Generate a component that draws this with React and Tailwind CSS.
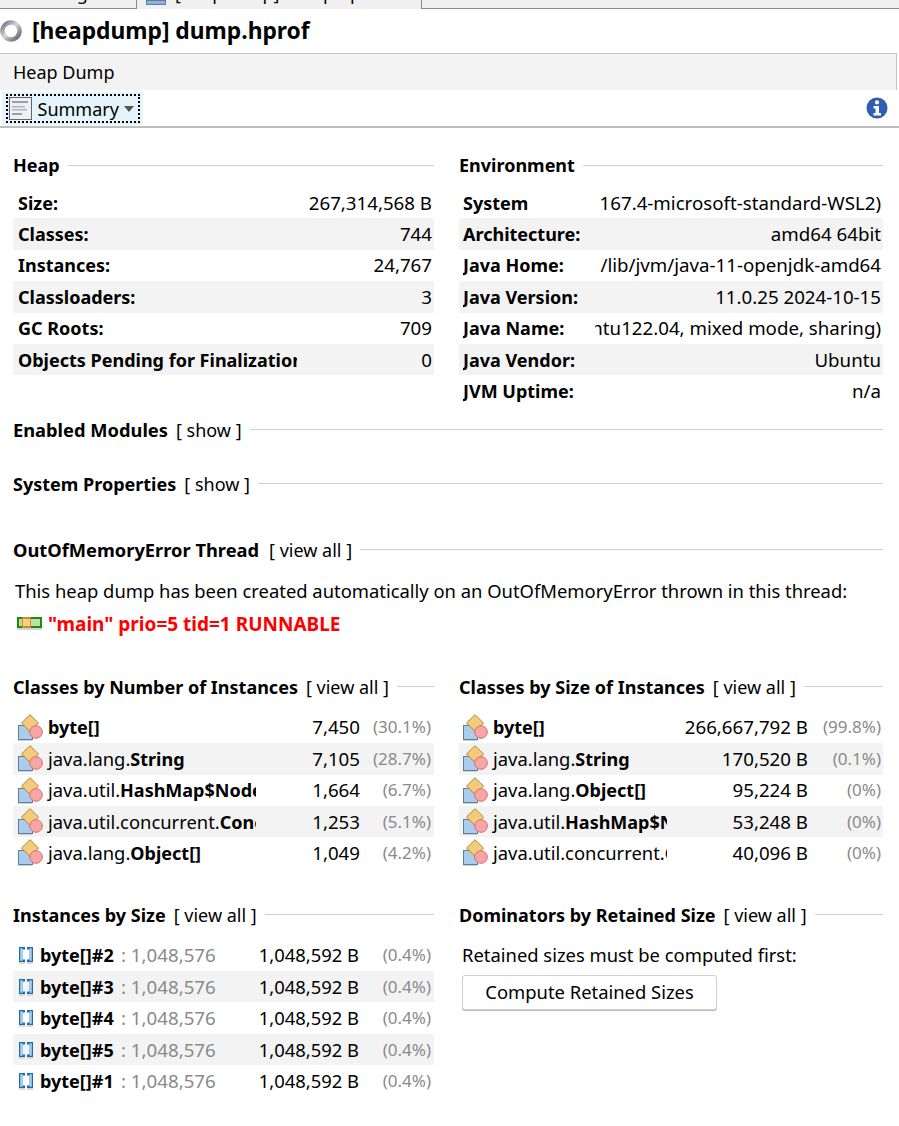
import React from "react";

const heap = [
  ["Size:", "267,314,568 B"],
  ["Classes:", "744"],
  ["Instances:", "24,767"],
  ["Classloaders:", "3"],
  ["GC Roots:", "709"],
  ["Objects Pending for Finalization:", "0"],
];

const env = [
  ["System", "167.4-microsoft-standard-WSL2)"],
  ["Architecture:", "amd64 64bit"],
  ["Java Home:", "/lib/jvm/java-11-openjdk-amd64"],
  ["Java Version:", "11.0.25 2024-10-15"],
  ["Java Name:", "ntu122.04, mixed mode, sharing)"],
  ["Java Vendor:", "Ubuntu"],
  ["JVM Uptime:", "n/a"],
];

const byCount = [
  ["", "byte[]", "7,450", "(30.1%)"],
  ["java.lang.", "String", "7,105", "(28.7%)"],
  ["java.util.", "HashMap$Node", "1,664", "(6.7%)"],
  ["java.util.concurrent.", "ConcurrentHashMap", "1,253", "(5.1%)"],
  ["java.lang.", "Object[]", "1,049", "(4.2%)"],
];

const bySize = [
  ["", "byte[]", "266,667,792 B", "(99.8%)"],
  ["java.lang.", "String", "170,520 B", "(0.1%)"],
  ["java.lang.", "Object[]", "95,224 B", "(0%)"],
  ["java.util.", "HashMap$Node", "53,248 B", "(0%)"],
  ["java.util.concurrent.", "ConcurrentHashMap", "40,096 B", "(0%)"],
];

const instances = ["byte[]#2", "byte[]#3", "byte[]#4", "byte[]#5", "byte[]#1"];

const stripe = (i) => (i % 2 === 1 ? "bg-[#f3f3f3]" : "");

const SpinnerIcon = () => (
  <svg width="23" height="24" viewBox="0 0 23 24" className="shrink-0">
    <defs>
      <linearGradient id="spin" x1="0" y1="0" x2="1" y2="1">
        <stop offset="0" stopColor="#6f7078" />
        <stop offset="0.45" stopColor="#d6d6da" />
        <stop offset="1" stopColor="#5c5e68" />
      </linearGradient>
    </defs>
    <circle cx="11" cy="12" r="8.5" fill="none" stroke="url(#spin)" strokeWidth="4.5" />
  </svg>
);

const SummaryIcon = () => (
  <svg width="23" height="23" viewBox="0 0 23 23" className="shrink-0">
    <rect x="0.5" y="0.5" width="22" height="22" fill="#eef0f2" stroke="#5d6670" />
    <rect x="3" y="4" width="16" height="2" fill="#9aa0a8" />
    <rect x="3" y="9" width="13" height="1.5" fill="#b0b5bb" />
    <rect x="3" y="12" width="15" height="1.5" fill="#b0b5bb" />
    <rect x="3" y="16" width="10" height="2" fill="#9aa0a8" />
  </svg>
);

const InfoIcon = () => (
  <svg width="22" height="22" viewBox="0 0 22 22">
    <circle cx="11" cy="11" r="10.5" fill="#2f5fb3" />
    <circle cx="11" cy="5.4" r="2.1" fill="#fff" />
    <path d="M7.5 9h5.5v7h2v2.5H7.5V16h2v-4.5h-2z" fill="#fff" />
  </svg>
);

const ThreadIcon = () => (
  <svg width="25" height="13" viewBox="0 0 25 13" className="shrink-0">
    <rect x="0" y="0" width="25" height="11" fill="#1e8a10" />
    <rect x="2" y="2" width="21" height="7" fill="#bfe0a0" />
    <rect x="5" y="0" width="9" height="11" fill="#c98a38" />
    <rect x="6" y="2" width="7" height="7" fill="#ffd27a" />
    <rect x="0" y="11" width="25" height="2" fill="#d4d4d4" />
  </svg>
);

const ClassIcon = () => (
  <svg width="26" height="27" viewBox="0 0 26 27" className="shrink-0">
    <rect x="1" y="26" width="14" height="1" fill="#d0d0d0" />
    <rect x="1.5" y="11.5" width="14" height="14" fill="#a9cdea" stroke="#5b7f9c" />
    <path d="M13 0.7L21.5 9L13 17.5L4.5 9Z" fill="#f2cc7c" stroke="#b3832c" />
    <circle cx="19" cy="18" r="6.3" fill="#f7a6a8" stroke="#d86a70" />
  </svg>
);

const ArrayIcon = () => (
  <svg width="16" height="18" viewBox="0 0 16 18" className="shrink-0">
    <path d="M1 1h6v2.6H4.4v9.8H7V16H1z" fill="#1f6cab" />
    <path d="M2.2 2.2h2.4v12.6H2.2z" fill="#a9d0ee" />
    <path d="M9 1h6v15H9v-2.6h2.6V3.6H9z" fill="#1f6cab" />
    <path d="M11.6 2.2h2.2v12.6h-2.2z" fill="#a9d0ee" />
    <rect x="1" y="16" width="6" height="2" fill="#d8d8d8" />
    <rect x="9" y="16" width="6" height="2" fill="#d8d8d8" />
  </svg>
);

const Header = ({ title, link, titleClass = "text-[18px]" }) => (
  <div className="flex items-center h-[22px] gap-2">
    <span className={`font-bold whitespace-nowrap ${titleClass}`}>{title}</span>
    {link && <span className="whitespace-nowrap text-[18px]">[ {link} ]</span>}
    <div className="flex-1 h-px bg-[#c9d0dc]" />
  </div>
);

const KeyValues = ({ rows, labelWidth, pad, valueClass }) => (
  <div>
    {rows.map(([k, v], i) => (
      <div key={k} className={`flex items-center h-[31.4px] ${pad} ${stripe(i)}`}>
        <div className={`${labelWidth} shrink-0 overflow-hidden whitespace-nowrap font-bold text-[18px]`}>{k}</div>
        <div className={`flex-1 min-w-0 flex justify-end overflow-hidden whitespace-nowrap text-[18.7px] ${valueClass}`}>{v}</div>
      </div>
    ))}
  </div>
);

const ClassRows = ({ rows, pad, nameWidth, countWidth, pctWidth }) => (
  <div>
    {rows.map(([pkg, name, count, pct], i) => (
      <div key={pkg + name} className={`flex items-center h-[31.4px] ${pad} pr-[3px] ${stripe(i)}`}>
        <ClassIcon />
        <div className={`${nameWidth} shrink-0 overflow-hidden whitespace-nowrap pl-[5px]`}>
          {pkg}
          <span className="font-bold text-[18px]">{name}</span>
        </div>
        <div className={`${countWidth} shrink-0 text-right whitespace-nowrap text-[18.7px]`}>{count}</div>
        <div className={`${pctWidth} shrink-0 text-right whitespace-nowrap text-[17px] text-[#8a8a8a]`}>{pct}</div>
      </div>
    ))}
  </div>
);

export default function App() {
  return (
    <div className="w-[899px] h-[1126px] bg-white text-black overflow-hidden text-[18.4px] leading-[24px] font-['Noto_Sans','Open_Sans',sans-serif]">
      {/* Barra de abas cortada */}
      <div className="flex h-[9px] bg-[#f0f0f0] overflow-hidden text-[18px]">
        <div className="w-[136px] h-full border-b border-[#8a8a8a] overflow-hidden pl-[28px]">
          <div className="-mt-[16px] leading-[18px]">Settings</div>
        </div>
        <div className="w-[286px] h-full border-x border-[#8a8a8a] flex pl-[9px] gap-[9px] overflow-hidden">
          <div className="w-[20px] h-[5px] bg-[#8fb4dc] border border-[#5b7f9c] shrink-0" />
          <div className="-mt-[16px] leading-[18px] whitespace-nowrap">[heapdump] dump.hprof</div>
        </div>
        <div className="flex-1 h-full border-b border-[#8a8a8a]" />
      </div>

      {/* Titulo */}
      <div className="flex items-center h-[44px] gap-[9px]">
        <SpinnerIcon />
        <span className="font-bold text-[22.8px]">[heapdump] dump.hprof</span>
      </div>

      <div className="w-[897px] h-[37px] bg-[#f3f3f3] border-t border-[#c4c4c4] border-r flex items-center pl-[13px] text-[18px]">
        Heap Dump
      </div>

      {/* Toolbar */}
      <div className="flex items-center justify-between h-[38px] border-b-2 border-[#bdbdbd] pl-[2px] pr-[11px]">
        <div className="h-[33px] w-[141px] bg-[#e5f3fb] flex items-center justify-center">
          <div className="h-[29px] w-[134px] border-2 border-dotted border-black flex items-center pl-[1px]">
            <SummaryIcon />
            <span className="pl-[6px] text-[18px] pt-[1px]">Summary</span>
            <span className="ml-[5px] mt-[2px] w-0 h-0 border-x-[5px] border-x-transparent border-t-[6px] border-t-[#555]" />
          </div>
        </div>
        <InfoIcon />
      </div>

      <div className="pl-[13px] pr-[16px] pt-[26px]">
        <div className="grid grid-cols-[421px_424px] gap-x-[25px]">
          <div>
            <Header title="Heap" />
            <div className="mt-[11px]">
              <KeyValues rows={heap} labelWidth="w-[279px]" pad="pl-[5px]" valueClass="pr-[2px]" />
            </div>
          </div>
          <div>
            <Header title="Environment" />
            <div className="mt-[11px]">
              <KeyValues rows={env} labelWidth="w-[132px]" pad="pl-[4px]" valueClass="pr-[2px]" />
            </div>
          </div>
        </div>

        <div className="mt-[12px]">
          <Header title="Enabled Modules" link="show" titleClass="text-[18.3px]" />
        </div>
        <div className="mt-[32px]">
          <Header title="System Properties" link="show" />
        </div>
        <div className="mt-[44px]">
          <Header title="OutOfMemoryError Thread" link="view all" titleClass="text-[18.3px] mr-[2px]" />
        </div>
        <div className="mt-[18px] pl-[2px] h-[24px] flex items-center whitespace-nowrap">
          This heap dump has been created automatically on an OutOfMemoryError thrown in this thread:
        </div>
        <div className="mt-[9px] pl-[4px] h-[24px] flex items-center gap-[6px] text-[#ff0000] font-bold text-[19px] whitespace-nowrap">
          <ThreadIcon />
          "main" prio=5 tid=1 RUNNABLE
        </div>

        <div className="grid grid-cols-[421px_424px] gap-x-[25px] mt-[40px]">
          <div>
            <Header title="Classes by Number of Instances" link="view all" />
            <div className="mt-[14px]">
              <ClassRows rows={byCount} pad="pl-[4px]" nameWidth="w-[213px]" countWidth="w-[104px]" pctWidth="w-[71px]" />
            </div>
          </div>
          <div>
            <Header title="Classes by Size of Instances" link="view all" />
            <div className="mt-[14px]">
              <ClassRows rows={bySize} pad="pl-[3px]" nameWidth="w-[179px]" countWidth="w-[141px]" pctWidth="w-[73px]" />
            </div>
          </div>
        </div>

        <div className="grid grid-cols-[421px_424px] gap-x-[25px] mt-[35px]">
          <div>
            <Header title="Instances by Size" link="view all" />
            <div className="mt-[14px]">
              {instances.map((name, i) => (
                <div key={name} className={`flex items-center h-[31.4px] pl-[5px] pr-[3px] ${stripe(i)}`}>
                  <ArrayIcon />
                  <span className="pl-[6px] font-bold text-[18px] w-[80px] whitespace-nowrap">{name}</span>
                  <span className="pl-[7px] text-[18.7px] text-[#8a8a8a] whitespace-nowrap">: 1,048,576</span>
                  <span className="flex-1 text-right whitespace-nowrap">1,048,592 B</span>
                  <span className="w-[72px] text-right text-[17px] text-[#8a8a8a] whitespace-nowrap">(0.4%)</span>
                </div>
              ))}
            </div>
          </div>
          <div>
            <Header title="Dominators by Retained Size" link="view all" />
            <div className="mt-[14px] pl-[3px] h-[31px] flex items-center">Retained sizes must be computed first:</div>
            <button className="ml-[3px] mt-[4px] w-[255px] h-[35px] bg-white border border-[#d0d0d0] rounded-[3px] shadow-[0_1px_0_#bbb]">
              Compute Retained Sizes
            </button>
          </div>
        </div>
      </div>
    </div>
  );
}
